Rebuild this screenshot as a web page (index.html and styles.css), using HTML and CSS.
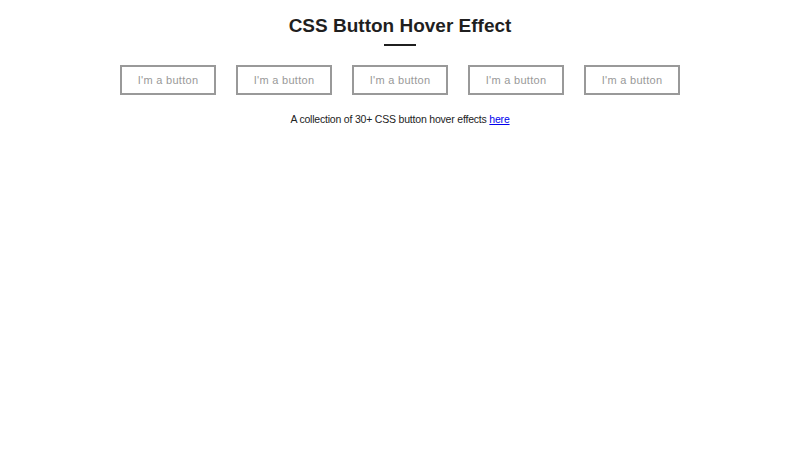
FILE: index.html
```html
<!DOCTYPE html>
<html>
<head>
<meta charset="utf-8">
<title>CSS Button Hover Effect</title>
<link rel="stylesheet" href="styles.css">
</head>
<body>
  <main class="page">
    <h1 class="title">CSS Button Hover Effect</h1>
    <div class="title-rule"></div>
    <div class="buttons">
      <button class="btn">I'm a button</button>
      <button class="btn">I'm a button</button>
      <button class="btn">I'm a button</button>
      <button class="btn">I'm a button</button>
      <button class="btn">I'm a button</button>
    </div>
    <p class="note">A collection of 30+ CSS button hover effects <a href="#">here</a></p>
  </main>
</body>
</html>
```
FILE: styles.css
```css
* { box-sizing: border-box; }
html, body { margin: 0; background: #fff; }
body {
  font-family: "Liberation Sans", Arial, sans-serif;
  color: #222;
}
.page {
  display: flex;
  flex-direction: column;
  align-items: center;
  padding-top: 14px;
}
.title {
  margin: 0;
  font-size: 19px;
  font-weight: bold;
  line-height: 24px;
  color: #1f1f1f;
}
.title-rule {
  width: 32px;
  height: 2px;
  background: #1f1f1f;
  margin-top: 6px;
}
.buttons {
  display: flex;
  gap: 20px;
  margin-top: 19px;
}
.btn {
  width: 96px;
  height: 30px;
  background: #fff;
  border: 2px solid #999;
  color: #999;
  font-family: "Liberation Sans", Arial, sans-serif;
  font-size: 11px;
  letter-spacing: 0.3px;
  padding: 0;
  cursor: pointer;
}
.note {
  margin: 17px 0 0;
  font-size: 10.5px;
  letter-spacing: -0.2px;
  line-height: 14px;
  color: #222;
}
.note a { color: #0000ee; }
```
